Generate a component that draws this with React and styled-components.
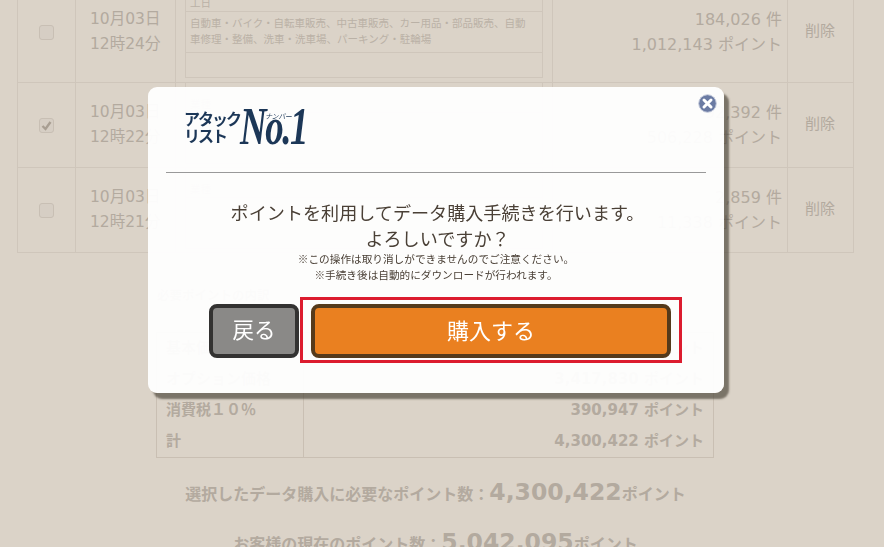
import React from "react";
import styled, { createGlobalStyle } from "styled-components";

const GlobalStyle = createGlobalStyle`
  html, body {
    margin: 0;
    height: 100%;
    overflow: hidden;
    background: #dbd3c8;
    font-family: "DejaVu Sans", "Noto Sans CJK JP", sans-serif;
    color: #b3aa9f;
  }
`;

const Page = styled.div`
  width: 884px;
  height: 547px;
  overflow: hidden;
`;

const Scrolled = styled.div`
  margin-top: -18px;
  padding: 0 30px 0 17px;
`;

const ListTable = styled.div`
  border: solid #cfc6bb;
  border-width: 0 1px 1px 1px;
`;

const ListRow = styled.div`
  display: grid;
  grid-template-columns: 57px 100px 377px 235px 65px;
  box-sizing: border-box;
  height: ${(p) => p.$height}px;
  border-bottom: 1px solid #cfc6bb;
  &:last-child {
    border-bottom: 0;
  }
`;

const Cell = styled.div`
  display: flex;
  flex-direction: column;
  justify-content: center;
  border-left: 1px solid #cfc6bb;
  &:first-child {
    border-left: 0;
    align-items: center;
  }
`;

const Check = styled.span`
  width: 13px;
  height: 13px;
  border: 1px solid #c8bfb4;
  border-radius: 3px;
  background: #d6cec4;
  display: flex;
  align-items: center;
  justify-content: center;
`;

const DateCell = styled(Cell)`
  padding-left: 14px;
  font-size: 15.5px;
  line-height: 25px;
  white-space: nowrap;
`;

const DetailCell = styled(Cell)`
  padding: 0 9px;
  justify-content: flex-start;
`;

const Inner = styled.div`
  border: solid #cfc6bb;
  border-width: 0 1px 1px 1px;
  font-family: "Noto Sans CJK JP", sans-serif;
  font-size: 10.5px;
  line-height: 16px;
  color: #bab1a6;
  height: ${(p) => p.$height}px;
`;

const InnerLine = styled.div`
  padding: ${(p) => p.$pad || "3px 4px"};
  border-bottom: 1px solid #cfc6bb;
  height: ${(p) => p.$height}px;
  box-sizing: border-box;
  white-space: nowrap;
`;

const PointCell = styled(Cell)`
  text-align: right;
  padding: 0 5px 1px 0;
  font-size: 16px;
  line-height: 25px;
  white-space: nowrap;
`;

const DeleteCell = styled(Cell)`
  align-items: center;
  padding-bottom: 5px;
  font-size: 15px;
`;

const BreakdownTitle = styled.div`
  margin: 34px 0 0 140px;
  font-size: 12.5px;
  font-weight: 700;
  line-height: 18px;
`;

const Breakdown = styled.div`
  margin: 27px 0 0 139px;
  width: 556px;
  border: 1px solid #c9bfb3;
  font-weight: 700;
  font-size: 15px;
`;

const BreakdownRow = styled.div`
  display: grid;
  grid-template-columns: 146px 1fr;
  height: 31px;
  line-height: 31px;
`;

const BreakdownLabel = styled.div`
  padding-left: 9px;
`;

const BreakdownValue = styled.div`
  border-left: 1px solid #c9bfb3;
  text-align: right;
  padding-right: 9px;
`;

const Total = styled.div`
  margin-top: ${(p) => p.$top}px;
  text-align: center;
  font-weight: 700;
  font-size: 16px;
  line-height: 32px;
  white-space: nowrap;
`;

const TotalNumber = styled.span`
  font-size: 23.5px;
`;

const Modal = styled.div`
  position: fixed;
  left: 148px;
  top: 87px;
  width: 576px;
  height: 306px;
  box-sizing: border-box;
  padding: 0 18px;
  border-radius: 9px;
  background: rgba(255, 255, 255, 0.95);
  box-shadow: 5px 6px 2px rgba(70, 64, 52, 0.65);
  color: #4a4036;
  text-align: center;
`;

const CloseButton = styled.svg`
  position: absolute;
  top: 7px;
  right: 7px;
`;

const LogoRow = styled.div`
  height: 86px;
  box-sizing: border-box;
  border-bottom: 1px solid #999;
  display: flex;
  align-items: flex-start;
  padding: 22px 0 0 18px;
`;

const Logo = styled.div`
  display: flex;
  align-items: flex-start;
  color: #1c3757;
  position: relative;
`;

const LogoKana = styled.div`
  font-family: "Noto Sans CJK JP", sans-serif;
  font-weight: 700;
  font-size: 16px;
  line-height: 17px;
  letter-spacing: -2px;
  text-align: left;
  margin: 1px 0 0 0;
`;

const LogoNumber = styled.div`
  font-family: "Liberation Serif", serif;
  font-weight: 700;
  font-style: italic;
  font-size: 52px;
  line-height: 36px;
  letter-spacing: -2px;
  white-space: nowrap;
  width: 66px;
  transform: scaleX(0.71);
  transform-origin: left center;
`;

const LogoRuby = styled.span`
  position: absolute;
  left: 81px;
  top: 3px;
  font-family: "Noto Sans CJK JP", sans-serif;
  font-size: 7px;
  line-height: 8px;
  letter-spacing: -0.4px;
  font-style: italic;
`;

const Message = styled.p`
  margin: 26px 0 0;
  padding-left: 3px;
  font-family: "Noto Sans CJK JP", sans-serif;
  font-size: 18.1px;
  line-height: 26px;
`;

const Note = styled.p`
  margin: 0;
  font-family: "Noto Sans CJK JP", sans-serif;
  font-size: 10.65px;
  line-height: 16px;
`;

const Actions = styled.div`
  display: flex;
  align-items: flex-start;
  gap: 1px;
  margin: 14px 0 0 43px;
`;

const Button = styled.button`
  height: 54px;
  box-sizing: border-box;
  margin-top: ${(p) => p.$top || 0}px;
  border: 4px solid ${(p) => p.$edge};
  border-radius: 8px;
  background: ${(p) => p.$fill};
  color: #fff;
  font-family: "Noto Sans CJK JP", sans-serif;
  font-size: ${(p) => p.$size}px;
  line-height: 42px;
  width: ${(p) => p.$width}px;
  padding: 0 0 4px;
`;

const Highlight = styled.div`
  border: 3px solid #dc1c2e;
  padding: 4px 8px 2px 8px;
  display: flex;
`;

const rows = [
  { height: 101, date: "10月03日", time: "12時24分", count: "184,026 件", points: "1,012,143 ポイント" },
  { height: 85, checked: true, date: "10月03日", time: "12時22分", count: "92,392 件", points: "506,228 ポイント" },
  { height: 84, date: "10月03日", time: "12時21分", count: "2,859 件", points: "11,338 ポイント" },
];

const breakdown = [
  ["基本価格", "491,645 ポイント"],
  ["オプション価格", "3,417,830 ポイント"],
  ["消費税１０％", "390,947 ポイント"],
  ["計", "4,300,422 ポイント"],
];

export default function App() {
  return (
    <Page>
      <GlobalStyle />
      <Scrolled>
        <ListTable>
          {rows.map((row, i) => (
            <ListRow key={row.time} $height={row.height}>
              <Cell>
                <Check>
                  {row.checked && (
                    <svg width="11" height="11" viewBox="0 0 11 11">
                      <path d="M1.5 6l3 3 5-7" fill="none" stroke="#a89e92" strokeWidth="2.4" />
                    </svg>
                  )}
                </Check>
              </Cell>
              <DateCell>
                <span>{row.date}</span>
                <span>{row.time}</span>
              </DateCell>
              <DetailCell>
                <Inner $height={i === 0 ? 95 : 80}>
                  <InnerLine $height={30} $pad="13px 4px 0">{i === 0 ? "工日" : "業種"}</InnerLine>
                  {i === 0 && (
                    <InnerLine $height={41}>
                      自動車・バイク・自転車販売、中古車販売、カー用品・部品販売、自動
                      <br />
                      車修理・整備、洗車・洗車場、パーキング・駐輪場
                    </InnerLine>
                  )}
                </Inner>
              </DetailCell>
              <PointCell>
                <span>{row.count}</span>
                <span>{row.points}</span>
              </PointCell>
              <DeleteCell>削除</DeleteCell>
            </ListRow>
          ))}
        </ListTable>
        <BreakdownTitle>必要ポイントの内訳</BreakdownTitle>
        <Breakdown>
          {breakdown.map(([label, value]) => (
            <BreakdownRow key={label}>
              <BreakdownLabel>{label}</BreakdownLabel>
              <BreakdownValue>{value}</BreakdownValue>
            </BreakdownRow>
          ))}
        </Breakdown>
        <Total $top={18}>
          選択したデータ購入に必要なポイント数：<TotalNumber>4,300,422</TotalNumber>ポイント
        </Total>
        <Total $top={15}>
          お客様の現在のポイント数：<TotalNumber>5,042,095</TotalNumber>ポイント
        </Total>
      </Scrolled>

      <Modal>
        <CloseButton width="19" height="19" viewBox="0 0 19 19">
          <circle cx="9.5" cy="9.5" r="8.8" fill="#6b7ba3" stroke="#c5cbdb" strokeWidth="1" />
          <path d="M6 6l7 7M13 6l-7 7" stroke="#fff" strokeWidth="3" strokeLinecap="round" />
        </CloseButton>
        <LogoRow>
          <Logo>
            <LogoKana>
              アタック
              <br />
              リスト
            </LogoKana>
            <LogoNumber>No.1</LogoNumber>
            <LogoRuby>ナンバー</LogoRuby>
          </Logo>
        </LogoRow>
        <Message>
          ポイントを利用してデータ購入手続きを行います。
          <br />
          よろしいですか？
        </Message>
        <Note>※この操作は取り消しができませんのでご注意ください。</Note>
        <Note>※手続き後は自動的にダウンロードが行われます。</Note>
        <Actions>
          <Button $width={90} $size={21.5} $top={7} $edge="#333231" $fill="#8a8987">戻る</Button>
          <Highlight>
            <Button $width={360} $size={22} $edge="#553a1b" $fill="#ea8020">購入する</Button>
          </Highlight>
        </Actions>
      </Modal>
    </Page>
  );
}
